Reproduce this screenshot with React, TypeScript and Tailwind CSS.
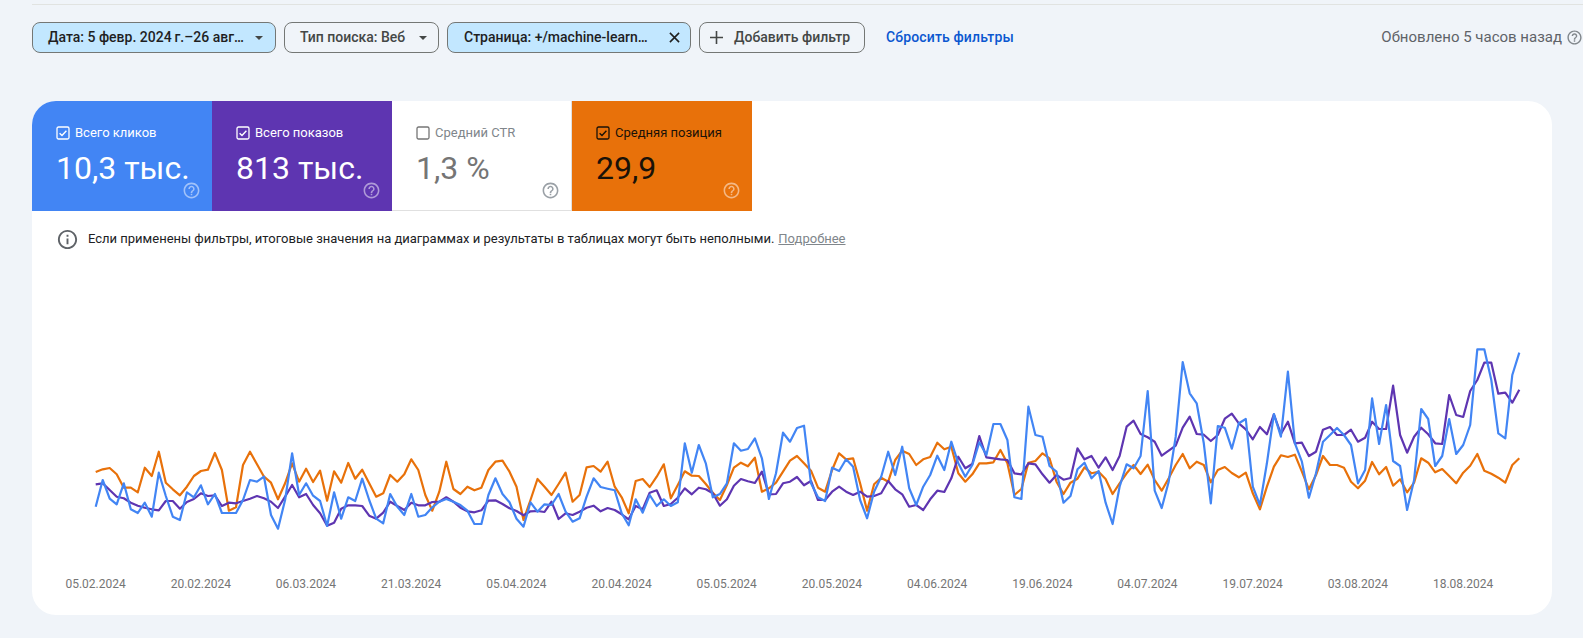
const STEP = 7.013;
const X0 = 95.7;

// Each series is read in segments; a segment is [screen y base, values at 3x].
type Seg = [number, number[]];
const toPoints = (segs: Seg[]) => {
  const out: string[] = [];
  let i = 0;
  for (const [base, vals] of segs) {
    for (const v of vals) {
      out.push(`${(X0 + STEP * i).toFixed(1)},${(base + v / 3).toFixed(1)}`);
      i++;
    }
  }
  return out.join(" ");
};

const orange: Seg[] = [
  [420, [156,148,144,163,203,203,217,143,168,95,188,208,226,200,168,153,149,99,150,272,262,135,95,133,170,188,238,190,130,185,146,186,152,242,154,188,129,176,149,190,230,220,165,185,163,118,150,225,272,215,125]],
  [420, [207,222,200,211,203,150,125,122,155,200,300,240,177,200,225,192,158,245,225,142,138,155,125,200,232,280,183,177,201,170,133,235,195,154,167,168,192,218,240,195,143,128,139,113,215,205,188,155,122,108,130,152,203,215,150,100,118]],
  [380, [235,310,392,313,293,305,240,212,222,255,238,231,188,208,200,280,305,283,250,250,247,210,250,345,327,248,243,220,235,305,342,308,296,262,280,275,297,342,310,280,255,282,254,300,332,295,255,222,265,245]],
  [330, [405,457,420,411,429,442,428,490,538,470,410,376,381,374,425,478,435,378,405,405,413,455,475,452,396,433,411,467,448,487,458,385,398,427,417,438,460,428,407,372,422,431,443,458,405,385]],
];
const purple: Seg[] = [
  [420, [193,190,210,230,235,248,257,263,268,271,243,243,266,246,237,220,228,226,258,248,250,243,236,228,235,245,264,230,195,232,222,255,280,317,308,266,256,256,258,287,296,278,245,258,270,248,256,256,246,245,232]],
  [420, [245,263,274,277,271,242,241,252,265,273,286,274,273,276,245,297,280,285,275,263,257,274,264,270,283,298,258,268,218,211,258,252,233,205,223,203,208,220,257,238,197,177,184,189,155,223,222,190,185,171,196,183,240,240,215,200,215]],
  [380, [345,335,350,348,340,303,328,343,380,375,390,358,332,336,295,230,265,252,168,232,235,238,240,280,283,250,253,283,308,285,299,294,205,238,228,263,232,270,228,140,122,162,172,185,227,212,197,143,110,162]],
  [330, [314,333,315,266,251,280,298,328,291,313,253,312,275,340,338,378,365,299,291,315,315,299,335,323,275,297,297,167,315,368,320,293,313,340,342,195,255,261,183,150,98,98,191,188,218,179]],
];
const blue: Seg[] = [
  [420, [260,180,236,253,190,268,279,248,290,158,228,290,300,217,232,196,253,222,279,279,279,240,180,185,170,285,326,240,100,225,190,227,243,318,217,296,232,243,176,240,296,310,222,260,285,222,290,285,262,245,237]],
  [420, [245,255,272,312,312,225,175,222,247,296,320,247,275,253,255,222,275,305,295,230,175,201,206,211,280,316,238,278,225,258,238,258,247,70,158,75,130,232,222,190,70,92,87,55,115,237,160,38,65,24,17,190,232,243,143,153,118]],
  [380, [260,360,415,335,290,215,285,200,325,375,320,285,227,270,185,250,290,255,187,225,132,132,180,352,357,80,165,170,258,275,368,348,268,248,295,273,368,432,320,253,265,228,33,332,384,305,170,-54,40,70]],
  [330, [340,520,288,293,356,280,267,470,525,400,252,320,125,340,395,503,430,335,315,294,315,345,460,420,205,342,225,393,408,540,450,237,267,408,378,267,372,345,285,58,58,150,310,325,135,68]],
];

const DATES = ["05.02.2024","20.02.2024","06.03.2024","21.03.2024","05.04.2024","20.04.2024","05.05.2024","20.05.2024","04.06.2024","19.06.2024","04.07.2024","19.07.2024","03.08.2024","18.08.2024"];

const HELP = "M11 18h2v-2h-2v2zm1-16C6.48 2 2 6.48 2 12s4.48 10 10 10 10-4.48 10-10S17.52 2 12 2zm0 18c-4.41 0-8-3.59-8-8s3.59-8 8-8 8 3.59 8 8-3.59 8-8 8zm0-14c-2.21 0-4 1.79-4 4h2c0-1.1.9-2 2-2s2 .9 2 2c0 2-3 1.75-3 5h2c0-2.25 3-2.5 3-5 0-2.21-1.79-4-4-4z";
const INFO = "M11 7h2v2h-2zm0 4h2v6h-2zm1-9C6.48 2 2 6.48 2 12s4.48 10 10 10 10-4.48 10-10S17.52 2 12 2zm0 18c-4.41 0-8-3.59-8-8s3.59-8 8-8 8 3.59 8 8-3.59 8-8 8z";

function Glyph({ d, size, className }: { d: string; size: number; className?: string }) {
  return (
    <svg width={size} height={size} viewBox="0 0 24 24" fill="currentColor" className={className}>
      <path d={d} />
    </svg>
  );
}

function Caret() {
  return (
    <svg width="8" height="4" viewBox="0 0 8 4" className="fill-[#444746] flex-none">
      <path d="M0 0h8L4 4z" />
    </svg>
  );
}

function Check({ checked }: { checked: boolean }) {
  return (
    <svg width="14" height="14" viewBox="0 0 14 14" fill="none" className="flex-none">
      <rect x="1" y="1" width="12" height="12" rx="1.5" stroke="currentColor" strokeWidth="1.3" />
      {checked && <path d="M3.6 7.2l2.4 2.3 4.4-4.7" stroke="currentColor" strokeWidth="1.4" />}
    </svg>
  );
}

function Tab({ label, value, checked, className, helpClass, labelClass }: { label: string; value: string; checked: boolean; className: string; helpClass: string; labelClass: string }) {
  return (
    <div className={`w-[180px] h-[110px] flex-none flex flex-col pl-6 pt-[24px] ${className}`}>
      <div className="flex items-center h-4 gap-[5px]">
        <Check checked={checked} />
        <span className={`text-[13px] leading-4 ${labelClass}`}>{label}</span>
      </div>
      <div className="text-[32px] leading-10 mt-[7px] whitespace-nowrap">{value}</div>
      <div className="flex justify-end pr-[11px] mt-[-7px]">
        <Glyph d={HELP} size={19} className={helpClass} />
      </div>
    </div>
  );
}

export default function App() {
  return (
    <div className="min-h-screen h-[638px] overflow-hidden bg-[#f0f4f9] font-['Roboto',sans-serif] text-[#1f1f1f]">
      <div className="pt-1 pl-8">
        <div className="h-px bg-[#e1e3e1]" />
      </div>

      <div className="flex items-center h-[31px] mt-[17px] pl-8 font-medium text-[14px]">
        <div className="flex items-center w-[244px] h-[31px] pl-[15px] pr-3 gap-2 rounded-lg border border-[#747775] bg-[#c2e7ff] flex-none">
          <span className="flex-1 whitespace-nowrap">Дата: 5 февр. 2024{"\u2009"}г.–26 авг…</span>
          <Caret />
        </div>
        <div className="flex items-center w-[155px] h-[31px] ml-2 pl-[15px] pr-[11px] rounded-lg border border-[#747775] text-[#444746] flex-none">
          <span className="flex-1 whitespace-nowrap">Тип поиска: Веб</span>
          <Caret />
        </div>
        <div className="flex items-center w-[244px] h-[31px] ml-2 pl-4 pr-[10px] rounded-lg border border-[#747775] bg-[#c2e7ff] flex-none">
          <span className="flex-1 whitespace-nowrap">Страница: +/machine-learn…</span>
          <svg width="11" height="11" viewBox="0 0 12 12" className="flex-none" stroke="#1f1f1f" strokeWidth="1.7">
            <path d="M1 1l10 10M11 1L1 11" />
          </svg>
        </div>
        <div className="flex items-center w-[166px] h-[31px] ml-2 pl-[10px] rounded-lg border border-[#747775] text-[#444746] flex-none gap-[11px]">
          <svg width="13" height="13" viewBox="0 0 13 13" className="flex-none" stroke="#444746" strokeWidth="1.6">
            <path d="M6.5 0v13M0 6.5h13" />
          </svg>
          <span className="whitespace-nowrap">Добавить фильтр</span>
        </div>
        <span className="ml-[21px] text-[#0b57d0] tracking-[0.15px] whitespace-nowrap">Сбросить фильтры</span>
        <div className="ml-auto flex items-center gap-1 font-normal text-[15px] text-[#5f6368]">
          <span className="whitespace-nowrap">Обновлено 5 часов назад</span>
          <Glyph d={HELP} size={17} className="text-[#80868b]" />
        </div>
      </div>

      <div className="mt-12 ml-8 mr-[31px] h-[514px] rounded-3xl bg-white overflow-hidden">
        <div className="flex">
          <Tab label="Всего кликов" value="10,3 тыс." checked className="bg-[#4285f4] text-white" labelClass="" helpClass="text-white/50" />
          <Tab label="Всего показов" value="813 тыс." checked className="bg-[#5e35b1] text-white" labelClass="" helpClass="text-white/50" />
          <Tab label="Средний CTR" value="1,3 %" checked={false} className="bg-white text-[#757575] border-r border-b border-[#e0e0e0]" labelClass="text-[#80868b]" helpClass="text-[#9aa0a6]" />
          <Tab label="Средняя позиция" value="29,9" checked className="bg-[#e8710a] text-[#1a1208]" labelClass="" helpClass="text-white/50" />
        </div>

        <div className="flex items-center h-[20px] mt-[18px] pl-[24px] text-[13px] text-[#202124]">
          <Glyph d={INFO} size={23} className="text-[#5f6368] flex-none" />
          <span className="ml-[9px] whitespace-nowrap">Если применены фильтры, итоговые значения на диаграммах и результаты в таблицах могут быть неполными.</span>
          <span className="ml-1 text-[#80868b] underline whitespace-nowrap">Подробнее</span>
        </div>

        <svg width="1520" height="310" viewBox="32 250 1520 310" fill="none" className="block mt-[1px]">
          <polyline points={toPoints(orange)} stroke="#e8710a" strokeWidth="2.2" strokeLinejoin="round" />
          <polyline points={toPoints(purple)} stroke="#5e35b1" strokeWidth="2.2" strokeLinejoin="round" />
          <polyline points={toPoints(blue)} stroke="#4285f4" strokeWidth="2.2" strokeLinejoin="round" />
        </svg>

        <div className="flex ml-[11px] mt-[16px] text-[12px] leading-4 text-[#757575]">
          {DATES.map((d) => (
            <div key={d} className="w-[105.2px] flex-none text-center">{d}</div>
          ))}
        </div>
      </div>
    </div>
  );
}
